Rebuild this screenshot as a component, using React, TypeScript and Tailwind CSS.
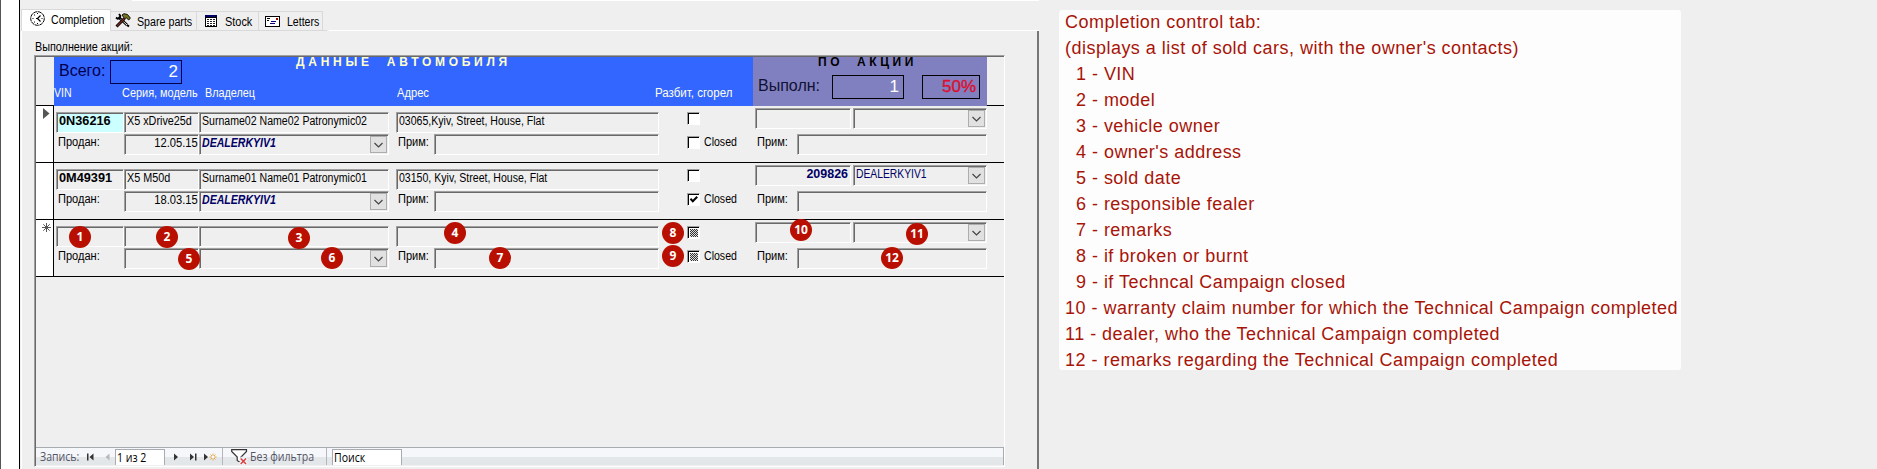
import React from "react";

const ui = "font-['Liberation_Sans',sans-serif] text-[12px] leading-[14px] whitespace-pre";

function T({
  className = "",
  scale = "scale-x-[.88]",
  children,
}: {
  className?: string;
  scale?: string;
  children: React.ReactNode;
}) {
  return <span className={`block origin-left ${ui} ${scale} ${className}`}>{children}</span>;
}

function Field({ className = "", children }: { className?: string; children?: React.ReactNode }) {
  return (
    <div
      className={`flex h-[21px] shrink-0 border-t border-l border-t-[#a0a0a0] border-l-[#a0a0a0] border-r border-b border-r-white border-b-white ${className}`}
    >
      <div className="flex min-w-0 flex-1 border-t border-l border-[#696969]">{children}</div>
    </div>
  );
}

function DropButton() {
  return (
    <div className="mr-px ml-auto flex h-[17px] w-[17px] shrink-0 items-center justify-center border border-[#adadad] bg-[#e1e1e1]">
      <svg width="9" height="6" viewBox="0 0 9 6" fill="none" stroke="#444" strokeWidth="1.2">
        <path d="M0.5 1 L4.5 5 L8.5 1" />
      </svg>
    </div>
  );
}

function Check({ state }: { state: "off" | "on" | "mixed" }) {
  return (
    <div className="h-[13px] w-[13px] shrink-0 border-t border-l border-r border-b border-t-[#a0a0a0] border-l-[#a0a0a0] border-r-white border-b-white">
      <div className="h-[11px] w-[11px] border-t border-l border-black bg-white">
        {state === "on" && (
          <svg width="10" height="10" viewBox="0 0 10 10" fill="none" stroke="#000" strokeWidth="2">
            <path d="M1.5 3.8 L3.8 6.2 L8.2 1.8" />
          </svg>
        )}
        {state === "mixed" && (
          <svg width="10" height="10" viewBox="0 0 10 10" shapeRendering="crispEdges">
            <rect x="1" y="1" width="8" height="8" fill="#ddd" />
            <path d="M1 1.5h8M1 3.5h8M1 5.5h8M1 7.5h8" stroke="#333" strokeDasharray="1 1" />
            <path d="M2 2.5h7M2 4.5h7M2 6.5h7M2 8.5h7" stroke="#333" strokeDasharray="1 1" />
          </svg>
        )}
      </div>
    </div>
  );
}

type Rec = {
  mark: "current" | "none" | "new";
  vin?: string;
  model?: string;
  owner?: string;
  address?: string;
  sold?: string;
  dealer?: string;
  broken: "off" | "on" | "mixed";
  closed: "off" | "on" | "mixed";
  claim?: string;
  claimDealer?: string;
};

const records: Rec[] = [
  {
    mark: "current",
    vin: "0N36216",
    model: "X5 xDrive25d",
    owner: "Surname02 Name02 Patronymic02",
    address: "03065,Kyiv, Street, House, Flat",
    sold: "12.05.15",
    dealer: "DEALERKYIV1",
    broken: "off",
    closed: "off",
  },
  {
    mark: "none",
    vin: "0M49391",
    model: "X5 M50d",
    owner: "Surname01 Name01 Patronymic01",
    address: "03150, Kyiv, Street, House, Flat",
    sold: "18.03.15",
    dealer: "DEALERKYIV1",
    broken: "off",
    closed: "on",
    claim: "209826",
    claimDealer: "DEALERKYIV1",
  },
  { mark: "new", broken: "mixed", closed: "mixed" },
];

function Row({ r }: { r: Rec }) {
  return (
    <div className="flex h-[57px] w-[968px] border-b border-black">
      <div className="w-[18px] shrink-0 border-r border-black bg-white">
        {r.mark === "current" && (
          <svg className="mt-[2px] ml-[7px]" width="7" height="11" viewBox="0 0 7 11">
            <path d="M0 0 L6.5 5.5 L0 11 Z" fill="#555" />
          </svg>
        )}
        {r.mark === "new" && (
          <svg className="mt-[3px] ml-[6px]" width="9" height="9" viewBox="0 0 9 9" stroke="#555" strokeWidth="1">
            <path d="M4.5 0V9M0 4.5H9M1.3 1.3L7.7 7.7M7.7 1.3L1.3 7.7" />
          </svg>
        )}
      </div>
      <div className="ml-[2px] flex w-[333px] shrink-0 flex-col gap-px pt-[6px]">
        <div className="flex">
          <Field className={r.mark === "current" ? "w-[68px] bg-[#ccffff]" : "w-[68px]"}>
            <T className="ml-px font-bold" scale="scale-x-[1.06]">
              {r.vin}
            </T>
          </Field>
          <Field className="w-[75px]">
            <T className="ml-px" scale="scale-x-[.9]">
              {r.model}
            </T>
          </Field>
          <Field className="w-[190px]">
            <T className="ml-px">{r.owner}</T>
          </Field>
        </div>
        <div className="flex">
          <div className="w-[68px] pt-px pl-[2px]">
            <T scale="scale-x-[.92]">Продан:</T>
          </div>
          <Field className="w-[75px]">
            <T className="ml-auto origin-right" scale="scale-x-[.93]">
              {r.sold}
            </T>
          </Field>
          <Field className="w-[190px]">
            <T className="ml-px font-bold text-[#000066] italic">{r.dealer}</T>
            <DropButton />
          </Field>
        </div>
      </div>
      <div className="ml-[7px] flex w-[263px] shrink-0 flex-col gap-px pt-[6px]">
        <Field className="w-[263px]">
          <T className="ml-px">{r.address}</T>
        </Field>
        <div className="flex">
          <div className="w-[38px] pt-px pl-[2px]">
            <T scale="scale-x-[.92]">Прим:</T>
          </div>
          <Field className="w-[225px]" />
        </div>
      </div>
      <div className="ml-[28px] flex w-[68px] shrink-0 flex-col gap-[11px] pt-[6px]">
        <Check state={r.broken} />
        <div className="flex h-[14px] gap-[4px]">
          <Check state={r.closed} />
          <T className="-mt-px">Closed</T>
        </div>
      </div>
      <div className="flex w-[232px] shrink-0 flex-col gap-[5px] pt-[2px]">
        <div className="flex gap-[2px]">
          <Field className="w-[96px]">
            <T className="mr-[2px] ml-auto origin-right font-bold text-[#000066]" scale="scale-x-[1.04]">
              {r.claim}
            </T>
          </Field>
          <Field className="w-[134px]">
            <T className="ml-px text-[#000066]" scale="scale-x-[.86]">
              {r.claimDealer}
            </T>
            <DropButton />
          </Field>
        </div>
        <div className="flex">
          <div className="w-[42px] pt-px pl-[2px]">
            <T scale="scale-x-[.92]">Прим:</T>
          </div>
          <Field className="w-[190px]" />
        </div>
      </div>
    </div>
  );
}

function ClockIcon() {
  return (
    <svg className="shrink-0" width="15" height="15" viewBox="0 0 15 15" fill="none" stroke="#000">
      <circle cx="7.5" cy="7.5" r="6.8" strokeDasharray="4 .6" />
      <path d="M7.5 7.5 L10.5 4.5 M7.5 7.5 L10.5 10.5" strokeWidth="1.2" />
      <path d="M7 2.5h1M7 12.5h1M2.5 7.5h1M11.5 7.5h1M4 4h1M4 11h1M6 7.5h2" />
    </svg>
  );
}

function ToolsIcon() {
  return (
    <svg className="shrink-0" width="16" height="15" viewBox="0 0 16 15" fill="none">
      <path d="M3.5 4 L12 12" stroke="#000" strokeWidth="2.6" />
      <path d="M4 4.5 L12.5 12.5" stroke="#fff" strokeWidth=".9" />
      <path d="M1 4.5 L2.5 5.8 L5 5.2 L5.3 2.8 L4 1" stroke="#000" strokeWidth="1.8" />
      <path d="M9.5 5.5 L1.5 13.5" stroke="#000" strokeWidth="3" />
      <path d="M9.5 5.5 L2 13" stroke="#80261c" strokeWidth="1.3" />
      <path d="M7 2 L9 .7 L12.5 1.5 L15.3 5 L13.8 7 L11.5 5 L9.5 5.5 Z" fill="#77751a" stroke="#111" strokeWidth="1" />
      <path d="M12 12 L14 13.5" stroke="#000" strokeWidth="2" />
    </svg>
  );
}

function TableIcon() {
  return (
    <svg width="12" height="12" viewBox="0 0 12 12" shapeRendering="crispEdges">
      <rect width="12" height="12" fill="#000" />
      <rect x="1" y="3" width="10" height="8" fill="#fff" />
      <rect width="12" height="2" fill="#000066" />
      <path d="M2 4.5h8M2 6.5h8M2 8.5h8M2 10.5h8" stroke="#222" strokeDasharray="2 1" />
    </svg>
  );
}

function LetterIcon() {
  return (
    <svg width="15" height="11" viewBox="0 0 15 11" shapeRendering="crispEdges">
      <rect x=".5" y=".5" width="14" height="10" fill="#fff" stroke="#000" />
      <path d="M2 2.5h3M2 4.5h2" stroke="#000" />
      <rect x="11" y="2" width="2" height="2" fill="#a00000" />
      <path d="M6 5.5h5M5 7.5h5" stroke="#000080" />
    </svg>
  );
}

function Tabs() {
  const tab = "flex h-[20px] shrink-0 border-t border-r border-b border-[#d9d9d9]";
  return (
    <div className="flex h-[22px] items-end">
      <div className="flex h-[22px] w-[90px] shrink-0 border-t border-l border-r border-[#d9d9d9] bg-white pt-px pl-[8px]">
        <ClockIcon />
        <T className="mt-[2px] ml-[6px]">Completion</T>
      </div>
      <div className={`${tab} w-[86px] pt-px pl-[4px]`}>
        <ToolsIcon />
        <T className="mt-[2px] ml-[6px]" scale="scale-x-[.89]">
          Spare parts
        </T>
      </div>
      <div className={`${tab} w-[62px] pl-[8px]`}>
        <div className="shrink-0 pt-[3px]">
          <TableIcon />
        </div>
        <T className="mt-[3px] ml-[8px]" scale="scale-x-[.91]">
          Stock
        </T>
      </div>
      <div className={`${tab} w-[64px] pl-[6px]`}>
        <div className="shrink-0 pt-[4px]">
          <LetterIcon />
        </div>
        <T className="mt-[3px] ml-[7px]">Letters</T>
      </div>
      <div className="h-px w-[4px] bg-[#d9d9d9]" />
      <div className="ml-[2px] h-px flex-1 bg-white" />
    </div>
  );
}

function Header() {
  return (
    <div className="flex h-[49px]">
      <div className="w-[18px] shrink-0 border-b border-black" />
      <div className="flex w-[699px] shrink-0 flex-col bg-[#3366ff]">
        <div className="flex h-[31px]">
          <span className="mt-[3px] ml-[5px] w-[51px] font-['Liberation_Sans',sans-serif] text-[16px] leading-[22px] text-[#00004d]">
            Всего:
          </span>
          <div className="mt-[3px] h-[24px] w-[72px] border border-[#00004d] pr-[3px] text-right font-['Liberation_Sans',sans-serif] text-[17px] leading-[22px] text-white">
            2
          </div>
          <span className="-mt-px ml-[114px] font-['Liberation_Sans',sans-serif] text-[12px] leading-[13px] font-bold tracking-[3.73px] whitespace-pre text-[#ffffcc]">
            ДАННЫЕ  АВТОМОБИЛЯ
          </span>
        </div>
        <div className="flex h-[18px] text-[#ffffee]">
          <div className="-mt-[2px] w-[68px]">
            <T>VIN</T>
          </div>
          <div className="-mt-[2px] w-[83px]">
            <T scale="scale-x-[.91]">Серия, модель</T>
          </div>
          <div className="-mt-[2px] w-[192px]">
            <T scale="scale-x-[.9]">Владелец</T>
          </div>
          <div className="-mt-[2px] w-[258px]">
            <T scale="scale-x-[.93]">Адрес</T>
          </div>
          <div className="-mt-[2px]">
            <T scale="scale-x-[.96]">Разбит, сгорел</T>
          </div>
        </div>
      </div>
      <div className="flex w-[234px] shrink-0 flex-col bg-[#8080c0]">
        <span className="-mt-px ml-[65px] h-[19px] font-['Liberation_Sans',sans-serif] text-[12px] leading-[13px] font-bold tracking-[3.6px] whitespace-pre text-black">
          ПО  АКЦИИ
        </span>
        <div className="flex font-['Liberation_Sans',sans-serif] text-[17px] leading-[22px]">
          <span className="ml-[5px] w-[74px] text-[16px] text-[#111133]">Выполн:</span>
          <div className="h-[24px] w-[72px] border border-black pr-[4px] text-right text-white">1</div>
          <div className="ml-[18px] h-[24px] w-[58px] border border-black pr-[3px] text-right text-[#dc1030] [-webkit-text-stroke:0.4px_#dc1030]">
            50%
          </div>
        </div>
      </div>
      <div className="w-[17px] border-b border-black" />
    </div>
  );
}

function Navigator() {
  const t = "block origin-left scale-x-[.88] font-['Open_Sans',sans-serif] text-[12px] leading-[17px] whitespace-pre";
  return (
    <div className="flex h-[18px] w-[968px] items-start border-t border-r border-[#a9abb3] bg-linear-to-b from-[#f5f7fa] from-55% to-[#e4e7ea] to-55%">
      <div className="ml-[4px] w-[47px] shrink-0 text-[#555566]">
        <span className={t}>Запись:</span>
      </div>
      <svg className="mt-[5px]" width="7" height="8" viewBox="0 0 7 8" fill="#333">
        <path d="M0 .5h1.5v7H0zM6.5 .5v7L2.5 4z" />
      </svg>
      <svg className="mt-[5px] ml-[11px]" width="5" height="8" viewBox="0 0 5 8" fill="#b8b8b8">
        <path d="M4.5 .5v7L.5 4z" />
      </svg>
      <div className="mt-px ml-[5px] h-[16px] w-[50px] shrink-0 border border-b-0 border-[#a9abb3] bg-white pl-px text-black">
        <span className={`${t} -mt-px`}>1 из 2</span>
      </div>
      <svg className="mt-[5px] ml-[9px]" width="5" height="8" viewBox="0 0 5 8" fill="#333">
        <path d="M0 .5v7L4 4z" />
      </svg>
      <svg className="mt-[5px] ml-[11px]" width="7" height="8" viewBox="0 0 7 8" fill="#333">
        <path d="M0 .5v7L4 4zM5 .5h1.5v7H5z" />
      </svg>
      <svg className="mt-[5px] ml-[7px]" width="13" height="9" viewBox="0 0 13 9">
        <path d="M0 .5v7L4 4z" fill="#333" />
        <path d="M9 0.5v7M5.5 4h7M6.5 1.5l5 5M11.5 1.5l-5 5" stroke="#e5a94d" strokeWidth="1" />
        <circle cx="9" cy="4" r="1.2" fill="#fff" />
      </svg>
      <div className="ml-[5px] h-[17px] w-px bg-[#b5b7be]" />
      <svg className="mt-px ml-[8px]" width="17" height="16" viewBox="0 0 17 16" fill="none">
        <path d="M.7 .7H15.5V2.5L10 8V14L6.2 11.5V8L.7 2.5Z" fill="#fff" stroke="#333" strokeWidth="1.2" />
        <path d="M9 9L15.5 15.5M15.5 9L9 15.5" stroke="#f2f4f7" strokeWidth="4" />
        <path d="M9.7 9.5L15 15M15 9.5L9.7 15" stroke="#d94040" strokeWidth="1.5" />
      </svg>
      <div className="ml-[2px] w-[76px] shrink-0 text-[#555566]">
        <span className={t}>Без фильтра</span>
      </div>
      <div className="h-[17px] w-px bg-[#b5b7be]" />
      <div className="mt-px ml-[5px] h-[16px] w-[70px] shrink-0 border border-b-0 border-[#a9abb3] bg-white pl-px text-black">
        <span className={`${t} -mt-px`}>Поиск</span>
      </div>
    </div>
  );
}

const badges: { n: number; pos: string }[] = [
  { n: 1, pos: "left-[69px] top-[226px]" },
  { n: 2, pos: "left-[156px] top-[226px]" },
  { n: 3, pos: "left-[288px] top-[227px]" },
  { n: 4, pos: "left-[444px] top-[222px]" },
  { n: 5, pos: "left-[178px] top-[248px]" },
  { n: 6, pos: "left-[321px] top-[247px]" },
  { n: 7, pos: "left-[489px] top-[247px]" },
  { n: 8, pos: "left-[662px] top-[222px]" },
  { n: 9, pos: "left-[662px] top-[245px]" },
  { n: 10, pos: "left-[790px] top-[219px]" },
  { n: 11, pos: "left-[906px] top-[223px]" },
  { n: 12, pos: "left-[881px] top-[247px]" },
];

const notes = [
  "Completion control tab:",
  "(displays a list of sold cars, with the owner's contacts)",
  "  1 - VIN",
  "  2 - model",
  "  3 - vehicle owner",
  "  4 - owner's address",
  "  5 - sold date",
  "  6 - responsible fealer",
  "  7 - remarks",
  "  8 - if broken or burnt",
  "  9 - if Techncal Campaign closed",
  "10 - warranty claim number for which the Technical Campaign completed",
  "11 - dealer, who the Technical Campaign completed",
  "12 - remarks regarding the Technical Campaign completed",
];

export default function App() {
  return (
    <div className="relative flex h-[469px] w-[1877px] overflow-hidden bg-[#efefef] text-black">
      <div className="w-[20px] shrink-0 border-r border-l border-r-black border-l-[#555] bg-white" />
      <div className="flex w-[1019px] shrink-0 flex-col">
        <div className="ml-[112px] h-px shrink-0 bg-white" />
        <div className="mt-[8px] ml-px shrink-0">
          <Tabs />
        </div>
        <div className="ml-px flex flex-1 flex-col border-r-2 border-l border-r-[#777] border-l-white pl-[12px]">
          <T className="mt-[9px] ml-px h-[15px]" scale="scale-x-[.9]">
            Выполнение акций:
          </T>
          <div className="flex h-[412px] w-[971px] flex-col border-t border-r border-b border-l border-t-[#a0a0a0] border-r-white border-b-white border-l-[#a0a0a0]">
            <div className="flex flex-1 flex-col border-t border-l border-[#696969]">
              <Header />
              {records.map((r) => (
                <Row key={r.mark} r={r} />
              ))}
              <div className="mt-auto mb-px">
                <Navigator />
              </div>
            </div>
          </div>
        </div>
      </div>
      <div className="mt-[10px] ml-[20px] h-[360px] w-[622px] rounded-[3px] bg-[#fdfdfd] pl-[6px] font-['Liberation_Sans',sans-serif] text-[18px] leading-[26px] tracking-[0.48px] whitespace-pre text-[#a81408]">
        {notes.map((n) => (
          <div key={n} className="-mt-px mb-px">
            {n}
          </div>
        ))}
      </div>
      {badges.map((b) => (
        <div
          key={b.n}
          className={`absolute flex h-[22px] w-[22px] items-center justify-center rounded-full bg-[#b90f00] font-['Open_Sans',sans-serif] text-[12px] leading-none font-bold text-white ${b.pos}`}
        >
          {b.n}
        </div>
      ))}
    </div>
  );
}
